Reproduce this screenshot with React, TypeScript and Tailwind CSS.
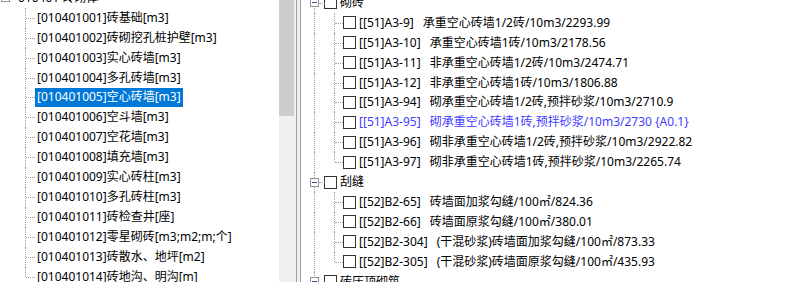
import React from "react";

const leftItems = [
  "[010401001]砖基础[m3]",
  "[010401002]砖砌挖孔桩护壁[m3]",
  "[010401003]实心砖墙[m3]",
  "[010401004]多孔砖墙[m3]",
  "[010401005]空心砖墙[m3]",
  "[010401006]空斗墙[m3]",
  "[010401007]空花墙[m3]",
  "[010401008]填充墙[m3]",
  "[010401009]实心砖柱[m3]",
  "[010401010]多孔砖柱[m3]",
  "[010401011]砖检查井[座]",
  "[010401012]零星砌砖[m3;m2;m;个]",
  "[010401013]砖散水、地坪[m2]",
  "[010401014]砖地沟、明沟[m]",
];

type Quota = { code: string; desc: string; mark?: boolean };

const groups: { name: string; items: Quota[] }[] = [
  {
    name: "砌砖",
    items: [
      { code: "[[51]A3-9]", desc: "承重空心砖墙1/2砖/10m3/2293.99" },
      { code: "[[51]A3-10]", desc: "承重空心砖墙1砖/10m3/2178.56" },
      { code: "[[51]A3-11]", desc: "非承重空心砖墙1/2砖/10m3/2474.71" },
      { code: "[[51]A3-12]", desc: "非承重空心砖墙1砖/10m3/1806.88" },
      { code: "[[51]A3-94]", desc: "砌承重空心砖墙1/2砖,预拌砂浆/10m3/2710.9" },
      { code: "[[51]A3-95]", desc: "砌承重空心砖墙1砖,预拌砂浆/10m3/2730 {A0.1}", mark: true },
      { code: "[[51]A3-96]", desc: "砌非承重空心砖墙1/2砖,预拌砂浆/10m3/2922.82" },
      { code: "[[51]A3-97]", desc: "砌非承重空心砖墙1砖,预拌砂浆/10m3/2265.74" },
    ],
  },
  {
    name: "刮缝",
    items: [
      { code: "[[52]B2-65]", desc: "砖墙面加浆勾缝/100㎡/824.36" },
      { code: "[[52]B2-66]", desc: "砖墙面原浆勾缝/100㎡/380.01" },
      { code: "[[52]B2-304]", desc: "(干混砂浆)砖墙面加浆勾缝/100㎡/873.33" },
      { code: "[[52]B2-305]", desc: "(干混砂浆)砖墙面原浆勾缝/100㎡/435.93" },
    ],
  },
  { name: "砖压顶砌筑", items: [] },
];

function MinusBox() {
  return (
    <span className="relative z-10 flex h-[9px] w-[9px] shrink-0 items-center justify-center border border-[#919191] bg-white">
      <span className="h-px w-[5px] bg-[#2a4d9b]" />
    </span>
  );
}

function Check() {
  return <span className="h-[13px] w-[13px] shrink-0 border border-[#333333] bg-white" />;
}

function LeftTree() {
  return (
    <div className="-mt-[12px] flex flex-col">
      <div className="flex h-[19.92px] items-center">
        <div className="relative flex h-full w-[18px] shrink-0 items-center">
          <span className="ml-px">
            <MinusBox />
          </span>
        </div>
        <span>010401 砖砌体</span>
      </div>
      {leftItems.map((t, i) => {
        const last = i === leftItems.length - 1;
        const sel = i === 4;
        return (
          <div key={t} className="flex h-[19.92px] items-center">
            <div className="relative h-full w-[35px] shrink-0">
              <span
                className={`absolute left-[25px] top-0 border-l border-dotted border-[#a0a0a0] ${last ? "h-1/2" : "bottom-0"}`}
              />
              <span className="absolute left-[26px] top-1/2 w-[9px] border-t border-dotted border-[#a0a0a0]" />
            </div>
            <span
              className={`flex h-[19px] items-center whitespace-nowrap px-[2px] ${sel ? "bg-[#0078d7] text-white" : "text-black"}`}
            >
              {t}
            </span>
          </div>
        );
      })}
    </div>
  );
}

function RightTree() {
  return (
    <div className="-mt-[7px] flex flex-col">
      {groups.map((g) => (
        <React.Fragment key={g.name}>
          <div className="flex h-[19.92px] items-center">
            <div className="relative flex h-full w-[23px] shrink-0 items-center">
              <span className="absolute left-[13px] top-0 bottom-0 border-l border-dotted border-[#a0a0a0]" />
              <span className="absolute left-[18px] top-1/2 w-[6px] border-t border-dotted border-[#a0a0a0]" />
              <span className="ml-[9px]">
                <MinusBox />
              </span>
            </div>
            <Check />
            <span className="ml-[3px] whitespace-nowrap">{g.name}</span>
          </div>
          {g.items.map((q, i) => {
            const last = i === g.items.length - 1;
            return (
              <div key={q.code} className="flex h-[19.92px] items-center">
                <div className="relative h-full w-[42px] shrink-0">
                  <span className="absolute left-[13px] top-0 bottom-0 border-l border-dotted border-[#a0a0a0]" />
                  <span
                    className={`absolute left-[33px] top-0 border-l border-dotted border-[#a0a0a0] ${last ? "h-1/2" : "bottom-0"}`}
                  />
                  <span className="absolute left-[34px] top-1/2 w-[8px] border-t border-dotted border-[#a0a0a0]" />
                </div>
                <Check />
                <span className={`ml-[3px] flex whitespace-nowrap ${q.mark ? "text-[#3f3cff]" : "text-black"}`}>
                  <span>{q.code}</span>
                  <span className="ml-[9px]">{q.desc}</span>
                </span>
              </div>
            );
          })}
        </React.Fragment>
      ))}
    </div>
  );
}

export default function App() {
  return (
    <div className="flex h-[282px] w-[787px] overflow-hidden bg-white font-['Noto_Sans','Noto_Sans_CJK_SC',sans-serif] text-[12px] leading-none text-black">
      <div className="w-[279px] shrink-0 overflow-hidden">
        <LeftTree />
      </div>
      <div className="flex w-[17px] shrink-0 flex-col bg-[#f0f0f0]">
        <div className="ml-0 mr-[2px] h-[116px] bg-[#cdcdcd]" />
      </div>
      <div className="w-[5px] shrink-0 border-x border-[#a0a0a0] bg-[#f0f0f0]" />
      <div className="flex-1 overflow-hidden">
        <RightTree />
      </div>
    </div>
  );
}
